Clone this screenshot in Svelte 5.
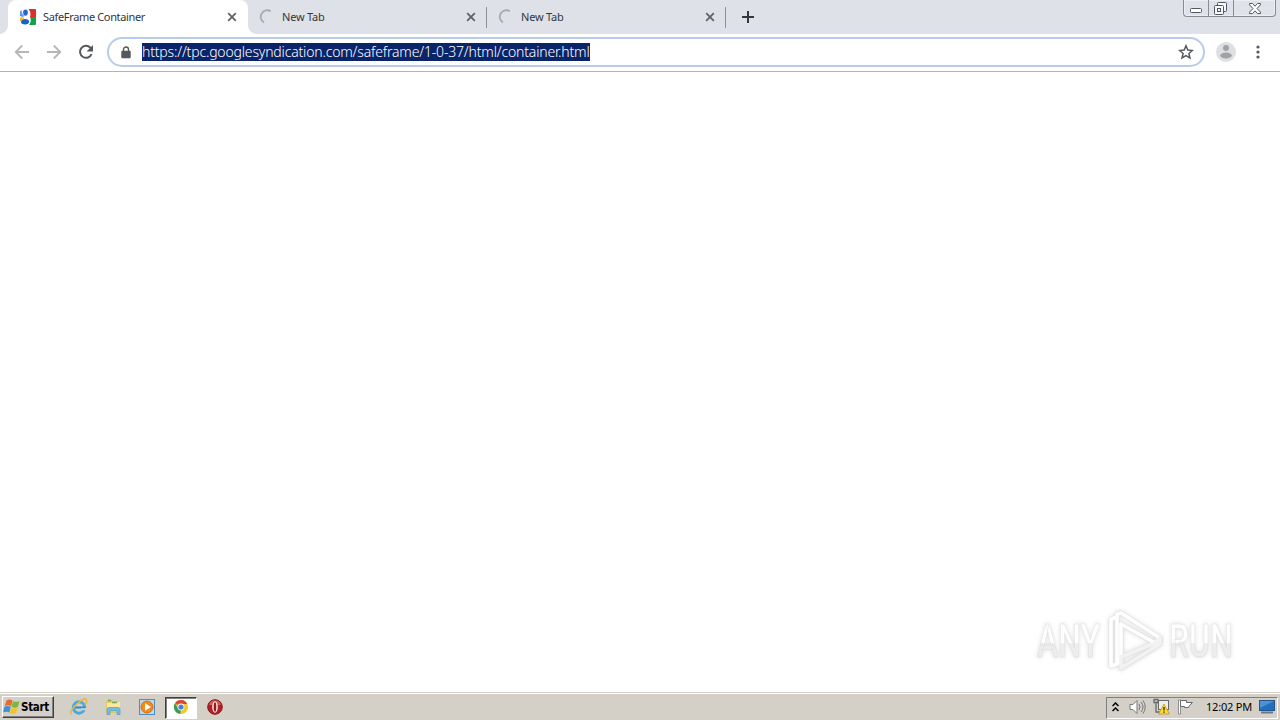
<script lang="ts">
  interface Tab {
    title: string;
    active?: boolean;
  }

  const tabs: Tab[] = [
    { title: 'SafeFrame Container', active: true },
    { title: 'New Tab' },
    { title: 'New Tab' }
  ];

  const url = 'https://tpc.googlesyndication.com/safeframe/1-0-37/html/container.html';
</script>

<div class="screen">
  <header class="tabstrip">
    {#each tabs as tab}
      <div class="tab" class:active={tab.active}>
        {#if tab.active}
          <svg class="favicon" width="16" height="16" viewBox="0 0 16 16">
            <rect width="16" height="16" rx="1" fill="#fff" />
            <path d="M8.5 0H15a1 1 0 0 1 1 1v7H10Q11.5 4 8.5 0z" fill="#d9302b" />
            <path d="M10 8h6v7a1 1 0 0 1-1 1H9q3-4 1-8z" fill="#16a047" />
            <path d="M0 6V2l1.5-1q0 4 3 6l-2 1L0 7z" fill="#5d9be8" />
            <ellipse cx="5.5" cy="3.6" rx="2.4" ry="3.1" fill="#2966c7" />
            <ellipse cx="5" cy="12.7" rx="4" ry="2.7" fill="#1c62c4" />
            <path d="M0 8.5h4.5L3 10.5l-3 2z" fill="#f4b720" />
          </svg>
        {:else}
          <svg class="favicon" width="16" height="16" viewBox="0 0 16 16">
            <path d="M5 13.6A6.4 6.4 0 0 1 11.8 2.2" fill="none" stroke="#a8abb1" stroke-width="1.8" />
          </svg>
        {/if}
        <span class="title">{tab.title}</span>
        <svg class="close" width="10" height="10" viewBox="0 0 10 10">
          <path d="M1.2 1.2l7.6 7.6M8.8 1.2L1.2 8.8" stroke="#5f6368" stroke-width="1.8" />
        </svg>
      </div>
    {/each}
    <svg class="new-tab" width="12" height="12" viewBox="0 0 12 12">
      <path d="M6 0v12M0 6h12" stroke="#35363a" stroke-width="2" />
    </svg>
    <div class="window-controls">
      <span class="minimize">
        <svg width="12" height="5" viewBox="0 0 12 5"><rect x=".5" y=".5" width="11" height="4" rx="1" fill="#fff" stroke="#53565e" /></svg>
      </span>
      <span class="restore">
        <svg width="13" height="13" viewBox="0 0 13 13" fill="#f7f8fa" stroke="#53565e">
          <rect x="3.5" y=".5" width="9" height="9" rx="1" />
          <rect x=".5" y="3.5" width="9" height="9" rx="1" />
          <rect x="3.5" y="6.5" width="3" height="3" />
        </svg>
      </span>
      <span class="exit">
        <svg width="12" height="11" viewBox="0 0 12 11">
          <path d="M.5.5h3L6 3.2 8.5.5h3v1.3L8 5.5l3.5 3.7v1.3h-3L6 7.8l-2.5 2.7h-3V9.2L4 5.5.5 1.8z" fill="#fff" stroke="#53565e" />
        </svg>
      </span>
    </div>
  </header>

  <nav class="toolbar">
    <svg class="nav-icon" width="16" height="16" viewBox="0 0 16 16" fill="none" stroke="#b5b6b8" stroke-width="1.8">
      <path d="M15 8H2M8.2 1.5L1.7 8l6.5 6.5" />
    </svg>
    <svg class="nav-icon" width="16" height="16" viewBox="0 0 16 16" fill="none" stroke="#b5b6b8" stroke-width="1.8">
      <path d="M1 8h13M7.8 1.5L14.3 8l-6.5 6.5" />
    </svg>
    <svg class="nav-icon" width="16" height="16" viewBox="0 0 16 16">
      <path d="M13.6 10A6 6 0 1 1 12.4 3.7L14 5.3" fill="none" stroke="#55585d" stroke-width="2" />
      <path d="M15 1v6.4H8.6z" fill="#55585d" />
    </svg>
    <div class="omnibox">
      <svg class="lock" width="10" height="13" viewBox="0 0 10 13">
        <path d="M2.5 6V3.5a2.5 2.5 0 0 1 5 0V6" fill="none" stroke="#55585d" stroke-width="1.4" />
        <rect x=".3" y="4.7" width="9.4" height="7.6" rx="1" fill="#55585d" />
      </svg>
      <span class="url">{url}</span>
      <svg class="star" width="16" height="16" viewBox="0 0 16 16">
        <path d="M8 1.8l1.8 4.3 4.6.4-3.5 3 1.1 4.5-4-2.4L4 14l1.1-4.5-3.5-3 4.6-.4z" fill="none" stroke="#55585d" stroke-width="1.5" />
      </svg>
    </div>
    <svg class="avatar" width="20" height="20" viewBox="0 0 20 20">
      <circle cx="10" cy="10" r="10" fill="#dedfe1" />
      <circle cx="10" cy="6" r="3" fill="#a0a2a5" />
      <ellipse cx="10" cy="13.5" rx="5.8" ry="3" fill="#a0a2a5" />
    </svg>
    <svg class="menu" width="4" height="14" viewBox="0 0 4 14" fill="#55585d">
      <circle cx="2" cy="2" r="1.6" />
      <circle cx="2" cy="7" r="1.6" />
      <circle cx="2" cy="12" r="1.6" />
    </svg>
  </nav>

  <main class="page">
    <div class="watermark">
      <span class="word">ANY</span>
      <svg width="60" height="66" viewBox="0 0 60 66" fill="none" stroke-linejoin="round">
        <g stroke="#e2e2e2" stroke-width="5">
          <path d="M12 9L6 11v47l6-2" />
          <path d="M16 5l39 25-5 5-34-19v34l-4 6V6z" />
          <path d="M16 49l34-14 5-5v6L16 60z" />
        </g>
        <g stroke="#fff" stroke-width="3.6">
          <path d="M12 9L6 11v47l6-2" />
          <path d="M16 5l39 25-5 5-34-19v34l-4 6V6z" />
          <path d="M16 49l34-14 5-5v6L16 60z" stroke="#f2f2f2" />
        </g>
      </svg>
      <span class="word">RUN</span>
    </div>
  </main>

  <footer class="taskbar">
    <button class="start">
      <svg width="17" height="16" viewBox="0 0 17 16">
        <path d="M3.5 1.5q3-2 6 0L8 7.2q-3-1.7-6.3 0z" fill="#e96a2d" />
        <path d="M10 2q3 1.7 6.5 0L15 7.8q-3 1.7-6.5 0z" fill="#7db642" />
        <path d="M1.5 7.8q3-1.7 6.3 0L6.3 13.5q-3-1.7-6.3 0z" fill="#3f91d5" />
        <path d="M8.3 8.4q3 1.7 6.5 0l-1.5 5.7q-3 1.7-6.5 0z" fill="#f4c22f" />
      </svg>
      <span>Start</span>
    </button>
    <div class="launch">
      <span class="app">
        <svg width="18" height="18" viewBox="0 0 18 18" fill="none">
          <circle cx="9" cy="9.5" r="5.7" stroke="#49a9e4" stroke-width="3" />
          <path d="M5 9.5h10" stroke="#398fcd" stroke-width="2.2" />
          <path d="M11 11.2h6" stroke="#d4d0c8" stroke-width="2" />
          <path d="M2 16Q-2 14 7 6t9-4q2 1-1 5" stroke="#e9b933" stroke-width="1.5" />
        </svg>
      </span>
      <span class="app">
        <svg width="18" height="18" viewBox="0 0 18 18">
          <path d="M2 2l5-1 2 2h6v12H2z" fill="#e6c765" />
          <path d="M3 5l13-1v9H3z" fill="#f8e99f" />
          <path d="M4 2.5h3M8 4.5h5" stroke="#75ab56" stroke-width="1.5" />
          <path d="M3 16.5v-5q0-2 2-2h9q2 0 2 2v5h-3v-4H6v4z" fill="#72bde3" stroke="#4b9dca" stroke-width=".7" />
        </svg>
      </span>
      <span class="app">
        <svg width="18" height="18" viewBox="0 0 18 18">
          <rect x="1.5" y="1.5" width="15" height="15" fill="#b7daf2" stroke="#4c8dc2" />
          <circle cx="9" cy="9" r="6" fill="#f28a19" stroke="#dc6f13" />
          <path d="M7 5.2L13 9l-6 3.8z" fill="#fff" />
        </svg>
      </span>
      <span class="app pressed">
        <svg width="16" height="16" viewBox="0 0 16 16">
          <circle cx="8" cy="8" r="7" fill="#f4c72c" />
          <path d="M8 8L2 4.3A7 7 0 0 1 14.2 5H8z" fill="#dc4639" />
          <path d="M2 4.3L5.4 10 8 11l-1 4A7 7 0 0 1 2 4.3z" fill="#389d58" />
          <circle cx="8" cy="8" r="3.4" fill="#fff" />
          <circle cx="8" cy="8" r="2.6" fill="#477fdc" />
        </svg>
      </span>
      <span class="app">
        <svg width="16" height="16" viewBox="0 0 16 16">
          <circle cx="8" cy="8" r="7.3" fill="#b51f24" stroke="#811b1d" />
          <path d="M2 6a6.3 6.3 0 0 1 12 0z" fill="#d65a57" />
          <ellipse cx="8" cy="8" rx="2.8" ry="5.7" fill="#f6eeee" />
          <ellipse cx="8" cy="8" rx="1.3" ry="4.7" fill="#94191d" />
        </svg>
      </span>
    </div>
    <div class="tray">
      <svg class="chevrons" width="7" height="10" viewBox="0 0 7 10" fill="none" stroke="#000" stroke-width="1.5">
        <path d="M.5 4l3-3 3 3M.5 9l3-3 3 3" />
      </svg>
      <svg class="volume" width="17" height="16" viewBox="0 0 17 16" fill="none" stroke="#77777a">
        <path d="M1 5.5h3l4-4v13l-4-4H1z" fill="#fff" />
        <path d="M10 5q2 3 0 6M12 3q4 5 0 10M14 1.5q4.5 6.5 0 13" />
      </svg>
      <svg class="network" width="17" height="17" viewBox="0 0 17 17">
        <rect x="5.5" y="2.5" width="10" height="9" fill="#eceef0" stroke="#66696d" />
        <path d="M1 1.5h4v3H1zM3 5v9h4M7 14h6" fill="none" stroke="#66696d" stroke-width="1.3" />
        <path d="M11 6l5.5 10h-11z" fill="#ffda2d" stroke="#c49b16" stroke-width=".8" />
        <path d="M11 9v3.5M11 13.5v1.3" stroke="#222" stroke-width="1.3" />
      </svg>
      <svg class="flag" width="17" height="16" viewBox="0 0 17 16">
        <path d="M1.5 1h2v14h-2z" fill="#fff" stroke="#77797c" stroke-width=".8" />
        <path d="M3.5 1.5h6v2h6l-3 3-1 2h-4v-1h-4z" fill="#fff" stroke="#66686b" />
      </svg>
      <span class="clock">12:02 PM</span>
      <svg class="desktop" width="16" height="14" viewBox="0 0 16 14">
        <rect x=".5" y=".5" width="15" height="10" fill="#246ebd" stroke="#24568c" />
        <path d="M1 1h14L1 8z" fill="#4c93d5" />
        <path d="M2 12.5h12" stroke="#64798f" stroke-width="2" />
      </svg>
    </div>
  </footer>
</div>

<style>
  :global(body) {
    margin: 0;
    overflow: hidden;
  }

  .screen {
    display: flex;
    flex-direction: column;
    width: 1280px;
    height: 720px;
    background: #fff;
    color: #35363a;
    font-family: 'Noto Sans', 'Open Sans', sans-serif;
  }

  svg {
    display: block;
    flex: none;
  }

  .tabstrip {
    display: flex;
    align-items: flex-start;
    height: 34px;
    padding-left: 8px;
    background: #dee1e8;
    box-sizing: border-box;
  }

  .tab {
    position: relative;
    display: flex;
    align-items: center;
    width: 239px;
    height: 34px;
    padding: 0 10px 0 11px;
    box-sizing: border-box;
    font-size: 11px;
  }

  .tab.active {
    width: 240px;
    padding: 0 11px 0 12px;
    border-radius: 8px 8px 0 0;
    background: #fff;
  }

  .tab.active::before,
  .tab.active::after {
    content: '';
    position: absolute;
    bottom: 0;
    width: 8px;
    height: 8px;
  }

  .tab.active::before {
    left: -8px;
    background: radial-gradient(circle at 0 0, transparent 7.5px, #fff 8px);
  }

  .tab.active::after {
    right: -8px;
    background: radial-gradient(circle at 100% 0, transparent 7.5px, #fff 8px);
  }

  .tab:not(.active) {
    border-right: 1px solid transparent;
    border-image: linear-gradient(transparent 8px, #8d9096 8px, #8d9096 27px, transparent 27px) 1;
  }

  .title {
    flex: 1;
    margin-left: 7px;
    line-height: 18px;
    letter-spacing: -0.2px;
    white-space: nowrap;
  }

  .active .title {
    letter-spacing: -0.35px;
  }

  .new-tab {
    margin: 11px 0 0 16px;
  }

  .window-controls {
    display: flex;
    width: 93px;
    height: 17px;
    margin: 0 4px 0 auto;
    box-sizing: border-box;
    border: 1px solid #888b93;
    border-top: 0;
    border-radius: 0 0 4px 4px;
    background: #dfe2e8;
    box-shadow: inset 0 0 0 1px #ebeef2;
  }

  .window-controls span {
    display: flex;
    align-items: center;
    justify-content: center;
    box-sizing: border-box;
  }

  .minimize {
    width: 25px;
    padding-top: 4px;
    border-right: 1px solid #888b93;
  }

  .restore {
    width: 25px;
    padding-right: 2px;
    border-right: 1px solid #888b93;
  }

  .exit {
    flex: 1;
  }

  .toolbar {
    display: flex;
    align-items: center;
    height: 38px;
    padding: 0 20px 1px 14px;
    box-sizing: border-box;
    border-bottom: 1px solid #b1b3b6;
  }

  .nav-icon {
    margin-right: 16px;
  }

  .omnibox {
    display: flex;
    flex: none;
    align-items: center;
    width: 1098px;
    height: 30px;
    margin-left: -3px;
    padding: 0 9px 0 12px;
    box-sizing: border-box;
    border: 2px solid #b8cbec;
    border-radius: 15px;
  }

  .url {
    width: 448px;
    height: 18px;
    margin: 0 auto 0 11px;
    background: #0a246a;
    color: #fff;
    font-size: 14px;
    font-weight: 300;
    line-height: 18px;
    letter-spacing: -0.17px;
    white-space: nowrap;
  }

  .avatar {
    margin: 0 20px 0 11px;
  }

  .page {
    display: flex;
    flex: 1;
    align-items: flex-end;
    justify-content: flex-end;
    padding: 0 47px 18px 0;
  }

  .watermark {
    display: flex;
    align-items: center;
    gap: 4px;
    filter: drop-shadow(0 0 2px #ddd);
  }

  .word {
    width: 64px;
    /* room for the glyphs before they are squeezed */
    padding-right: 30px;
    margin-right: -30px;
    background: linear-gradient(#fff 53%, #ededed 54%);
    background-clip: text;
    color: transparent;
    font-family: Roboto, sans-serif;
    font-size: 47px;
    font-weight: 500;
    line-height: 54px;
    transform: scaleX(0.68);
    transform-origin: left;
    -webkit-text-stroke: 0.5px #dcdcdc;
  }

  .taskbar {
    display: flex;
    align-items: center;
    height: 28px;
    padding: 2px 2px 0 2px;
    box-sizing: border-box;
    border-top: 1px solid #d4d0c8;
    background: #d4d0c8;
    box-shadow: inset 0 1px #fff;
    color: #000;
  }

  .start {
    display: flex;
    align-items: center;
    gap: 1px;
    width: 52px;
    height: 22px;
    margin-bottom: 1px;
    padding: 0;
    box-sizing: border-box;
    border: 1px solid;
    border-color: #fff #404040 #404040 #fff;
    background: #d4d0c8;
    box-shadow: inset -1px -1px #808080;
    font: bold 11.5px 'DejaVu Sans Condensed', 'DejaVu Sans', sans-serif;
    letter-spacing: -0.3px;
    color: #000;
  }

  .launch {
    display: flex;
    gap: 2px;
    margin-left: 9px;
  }

  .app {
    display: flex;
    align-items: center;
    justify-content: center;
    width: 32px;
    height: 22px;
    padding-bottom: 1px;
    box-sizing: border-box;
  }

  .app.pressed {
    border: 1px solid;
    border-color: #404040 #fff #fff #404040;
    background: #fff;
    box-shadow: inset 1px 1px #808080;
  }

  .tray {
    display: flex;
    align-items: center;
    width: 172px;
    height: 22px;
    margin-left: auto;
    padding: 0 0 2px 5px;
    box-sizing: border-box;
    border: 1px solid;
    border-color: #808080 #fff #fff #808080;
  }

  .volume {
    margin-left: 10px;
  }

  .network {
    margin-left: 7px;
  }

  .flag {
    margin-left: 7px;
  }

  .clock {
    width: 48px;
    margin-left: 12px;
    font-size: 11px;
    letter-spacing: -0.2px;
    white-space: nowrap;
  }

  .desktop {
    margin-left: 5px;
  }
</style>
